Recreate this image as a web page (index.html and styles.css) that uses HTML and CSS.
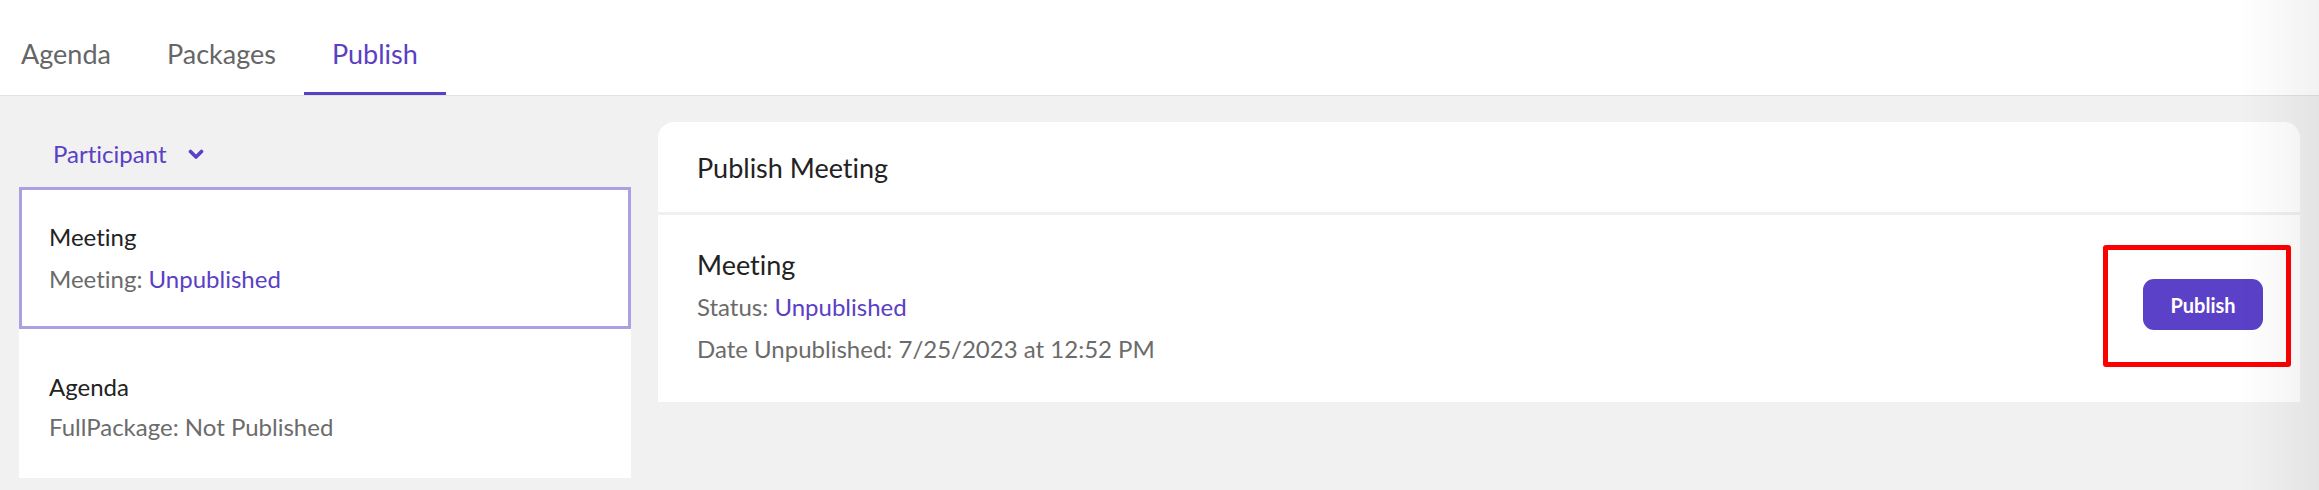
FILE: index.html
```html
<!DOCTYPE html>
<html lang="en">
<head>
<meta charset="utf-8">
<title>Publish</title>
<link rel="stylesheet" href="styles.css">
</head>
<body>
<header class="topbar">
  <nav class="tabs">
    <a class="tab tab-first">Agenda</a>
    <a class="tab">Packages</a>
    <a class="tab tab-active">Publish</a>
  </nav>
</header>
<main class="main">
  <aside class="sidebar">
    <div class="role-select">
      <span class="role-label">Participant</span>
      <svg class="chevron" width="16" height="11" viewBox="0 0 16 11"><polyline points="2.5,2.5 8,8 13.5,2.5" fill="none" stroke="currentColor" stroke-width="3.6" stroke-linecap="round" stroke-linejoin="round"/></svg>
    </div>
    <div class="item item-selected">
      <div class="item-title">Meeting</div>
      <div class="item-sub">Meeting: <span class="accent">Unpublished</span></div>
    </div>
    <div class="item item-plain">
      <div class="item-title">Agenda</div>
      <div class="item-sub">FullPackage: Not Published</div>
    </div>
  </aside>
  <section class="panel">
    <div class="panel-head">Publish Meeting</div>
    <div class="panel-body">
      <div class="info">
        <div class="info-title">Meeting</div>
        <div class="info-line info-status">Status: <span class="accent">Unpublished</span></div>
        <div class="info-line info-date">Date Unpublished: 7/25/2023 at 12:52 PM</div>
      </div>
      <div class="highlight">
        <button class="btn-publish">Publish</button>
      </div>
    </div>
  </section>
</main>
<div class="edge-shade"></div>
</body>
</html>
```

FILE: styles.css
```css
* { box-sizing: border-box; }
html, body { margin: 0; height: 100%; }
body {
  background: #f1f1f1;
  font-family: Lato, "Open Sans", sans-serif;
  font-variant-ligatures: no-common-ligatures;
  color: #222;
  overflow: hidden;
}
.topbar {
  background: #fff;
  height: 96px;
  border-bottom: 1px solid #e2e2e2;
}
.tabs { display: flex; height: 95px; }
.tab {
  display: flex;
  align-items: center;
  padding: 14px 28px 0;
  font-size: 27px;
  color: #666;
  border-bottom: 3px solid transparent;
}
.tab-first { padding-left: 21px; }
.tab-active { color: #5a40c4; border-bottom-color: #5a40c4; }

.main {
  display: flex;
  align-items: flex-start;
  gap: 27px;
  padding: 26px 19px 0;
}
.sidebar { width: 612px; flex: none; }
.role-select {
  height: 65px;
  padding: 0 0 3px 34px;
  display: flex;
  align-items: center;
  gap: 21px;
  color: #5a40c4;
  font-size: 24px;
}
.chevron { display: block; margin-top: 2px; }
.item {
  background: #fff;
  padding-left: 30px;
  display: flex;
  flex-direction: column;
  justify-content: center;
}
.item-selected {
  height: 142px;
  border: 3px solid #aaa0e2;
  padding-left: 27px;
}
.item-selected .item-sub { margin-top: 12px; }
.item-plain { height: 149px; padding-top: 6px; }
.item-title { font-size: 24px; color: #222; line-height: 30px; }
.item-sub { font-size: 24px; color: #6b6b6b; line-height: 30px; margin-top: 10px; }
.accent { color: #5a40c4; }

.panel {
  flex: 1;
  background: #fff;
  border-radius: 16px 16px 0 0;
}
.panel-head {
  height: 93px;
  padding-left: 39px;
  display: flex;
  align-items: center;
  font-size: 27px;
  color: #222;
  border-bottom: 3px solid #f0f0f0;
}
.panel-body {
  height: 187px;
  padding: 0 9px 5px 39px;
  display: flex;
  align-items: center;
  justify-content: space-between;
}
.info-title { font-size: 27px; line-height: 34px; color: #222; }
.info-line { font-size: 24px; line-height: 30px; color: #6b6b6b; }
.info-status { margin-top: 10px; }
.info-date { margin-top: 12px; }
.highlight {
  border: 5px solid #ff0000;
  border-radius: 3px;
  padding: 29px 23px 32px 35px;
}
.btn-publish {
  display: block;
  width: 120px;
  height: 51px;
  border: none;
  border-radius: 11px;
  background: #5b41c8;
  color: #fff;
  font-family: Lato, sans-serif;
  font-weight: 700;
  font-size: 20px;
}
.edge-shade {
  position: fixed;
  top: 0; right: 0; bottom: 0;
  width: 80px;
  background: linear-gradient(to right, rgba(0,0,0,0), rgba(0,0,0,0.05));
  pointer-events: none;
}
```
